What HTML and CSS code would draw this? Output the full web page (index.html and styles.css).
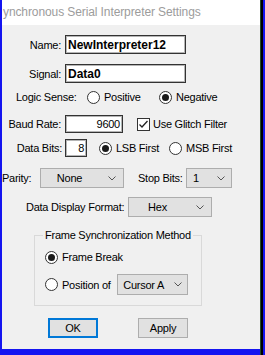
FILE: index.html
```html
<!DOCTYPE html>
<html lang="en">
<head>
    <meta charset="UTF-8">
    <title>Synchronous Serial Interpreter Settings</title>
    <link rel="stylesheet" href="styles.css">
</head>
<body>
    <div class="screen">
        <div class="window">
            <div class="titlebar">ynchronous Serial Interpreter Settings</div>

            <div class="content">
                <div class="row row-name">
                    <span class="label label-col">Name:</span>
                    <span class="textbox textbox-wide bold">NewInterpreter12</span>
                </div>

                <div class="row row-signal">
                    <span class="label label-col">Signal:</span>
                    <span class="textbox textbox-wide bold">Data0</span>
                </div>

                <!-- logic sense -->
                <div class="row row-logic">
                    <span class="label">Logic Sense:</span>
                    <span class="option option-positive">
                        <span class="radio"></span>
                        <span class="label">Positive</span>
                    </span>
                    <span class="option">
                        <span class="radio checked"></span>
                        <span class="label">Negative</span>
                    </span>
                </div>

                <div class="row row-baud">
                    <span class="label label-col">Baud Rate:</span>
                    <span class="textbox textbox-baud num">9600</span>
                    <span class="option option-glitch">
                        <span class="checkbox">
                            <svg width="11" height="11" viewBox="0 0 11 11"><polyline points="1.5,5.5 4,8 9.5,2" fill="none" stroke="#222" stroke-width="1.3"/></svg>
                        </span>
                        <span class="label">Use Glitch Filter</span>
                    </span>
                </div>

                <div class="row row-bits">
                    <span class="label label-col label-bits">Data Bits:</span>
                    <span class="textbox textbox-bits num">8</span>
                    <span class="option option-lsb">
                        <span class="radio checked"></span>
                        <span class="label">LSB First</span>
                    </span>
                    <span class="option">
                        <span class="radio"></span>
                        <span class="label">MSB First</span>
                    </span>
                </div>

                <div class="row row-parity">
                    <span class="label label-parity">Parity:</span>
                    <span class="combo combo-parity">
                        <span class="combo-text">None</span>
                        <svg class="chevron" width="8" height="5" viewBox="0 0 8 5"><polyline points="0.5,0.5 4,4 7.5,0.5" fill="none" stroke="#555" stroke-width="1"/></svg>
                    </span>
                    <span class="label label-stop">Stop Bits:</span>
                    <span class="combo combo-stop">
                        <span class="combo-text">1</span>
                        <svg class="chevron" width="8" height="5" viewBox="0 0 8 5"><polyline points="0.5,0.5 4,4 7.5,0.5" fill="none" stroke="#555" stroke-width="1"/></svg>
                    </span>
                </div>

                <div class="row row-format">
                    <span class="label">Data Display Format:</span>
                    <span class="combo combo-format">
                        <span class="combo-text">Hex</span>
                        <svg class="chevron" width="8" height="5" viewBox="0 0 8 5"><polyline points="0.5,0.5 4,4 7.5,0.5" fill="none" stroke="#555" stroke-width="1"/></svg>
                    </span>
                </div>

                <!-- frame sync group -->
                <fieldset class="group">
                    <legend class="group-title">Frame Synchronization Method</legend>
                    <div class="row row-break">
                        <span class="option">
                            <span class="radio checked"></span>
                            <span class="label">Frame Break</span>
                        </span>
                    </div>
                    <div class="row row-position">
                        <span class="option">
                            <span class="radio"></span>
                            <span class="label">Position of</span>
                        </span>
                        <span class="combo combo-cursor">
                            <span class="combo-text">Cursor A</span>
                            <svg class="chevron" width="8" height="5" viewBox="0 0 8 5"><polyline points="0.5,0.5 4,4 7.5,0.5" fill="none" stroke="#555" stroke-width="1"/></svg>
                        </span>
                    </div>
                </fieldset>

                <div class="buttons">
                    <button class="btn btn-default">OK</button>
                    <button class="btn">Apply</button>
                </div>
            </div>
        </div>
        <div class="edge"></div>
    </div>
</body>
</html>
```

FILE: styles.css
```css
body {
    margin: 0;
    padding: 0;
    width: 265px;
    height: 355px;
    overflow: hidden;
    background: #1414f0;
    font-family: 'Liberation Sans', Arial, sans-serif;
    font-size: 11px;
    letter-spacing: -0.25px;
    color: #000;
}

.screen {
    display: flex;
    height: 355px;
    padding-left: 2px;
    box-sizing: border-box;
}

.window {
    width: 258px;
    height: 349px;
    background: #f0f0f0;
    display: flex;
    flex-direction: column;
}

.edge {
    width: 2px;
    height: 355px;
    background: #000;
    border-left: 1px solid #1f4a2a;
}

.titlebar {
    height: 25px;
    line-height: 24px;
    background: #fff;
    color: #9c9c9c;
    font-size: 12px;
    letter-spacing: -0.1px;
    padding-left: 1px;
    white-space: nowrap;
    overflow: hidden;
}

.content {
    display: flex;
    flex-direction: column;
}

.row {
    display: flex;
    align-items: center;
}

.label {
    white-space: nowrap;
}

.label-col {
    width: 59px;
    text-align: right;
    margin-right: 4px;
}

.label-bits {
    width: 60px;
    margin-right: 3px;
}

/* text boxes */
.textbox {
    height: 19px;
    box-sizing: border-box;
    background: #fff;
    border: 1px solid #333;
    box-shadow: inset 0 0 0 1px #b5b5b5;
    display: flex;
    align-items: center;
    padding: 0 2px;
}

.textbox.bold {
    font-weight: bold;
    font-size: 12px;
    letter-spacing: 0;
}

.textbox.num {
    justify-content: flex-end;
    padding-right: 2px;
}

.textbox-wide {
    width: 121px;
}

.textbox-baud {
    width: 58px;
}

.textbox-bits {
    width: 22px;
}

.row-name {
    margin-top: 10px;
}

.row-signal {
    margin-top: 10px;
}

.row-logic {
    margin-top: 6px;
    height: 16px;
    padding-left: 14px;
}

.row-logic > .label {
    width: 71px;
}

.row-baud {
    margin-top: 10px;
    height: 18px;
}

.row-baud .textbox,
.row-bits .textbox {
    height: 18px;
}

.row-bits {
    margin-top: 6px;
    height: 18px;
}

/* radios and checkboxes */
.option {
    display: flex;
    align-items: center;
    gap: 4px;
}

.option-positive {
    width: 72px;
}

.option-glitch {
    margin-left: 14px;
    gap: 3px;
}

.option-lsb {
    margin-left: 12px;
    width: 70px;
}

.radio {
    width: 13px;
    height: 13px;
    box-sizing: border-box;
    border: 1px solid #333;
    border-radius: 50%;
    background: #fff;
    display: flex;
    align-items: center;
    justify-content: center;
}

.radio.checked::after {
    content: "";
    width: 7px;
    height: 7px;
    border-radius: 50%;
    background: #1a1a1a;
}

.checkbox {
    width: 13px;
    height: 13px;
    box-sizing: border-box;
    border: 1px solid #333;
    background: #fff;
    display: flex;
    align-items: center;
    justify-content: center;
}

/* combo boxes */
.combo {
    height: 20px;
    box-sizing: border-box;
    background: #e1e1e1;
    border: 1px solid #adadad;
    display: flex;
    align-items: center;
    padding-right: 4px;
}

.combo-text {
    flex: 1;
    text-align: center;
}

.chevron {
    flex: none;
}

.row-parity {
    margin-top: 11px;
    height: 20px;
}

.label-parity {
    width: 38px;
}

.combo-parity {
    width: 84px;
    padding-right: 7px;
}

.combo-parity .combo-text {
    padding-right: 10px;
}

.label-stop {
    margin-left: 14px;
    width: 48px;
}

.combo-stop {
    width: 46px;
    padding-right: 6px;
}

.combo-stop .combo-text {
    padding-right: 12px;
}

.row-format {
    margin-top: 9px;
    height: 20px;
    padding-left: 24px;
}

.row-format .label {
    width: 102px;
}

.combo-format {
    width: 84px;
    padding-right: 7px;
}

.combo-format .combo-text {
    padding-right: 10px;
}

/* group box */
.group {
    margin: 12px 0 0 32px;
    width: 168px;
    box-sizing: border-box;
    border: 1px solid #d9d9d9;
    padding: 0 0 10px 10px;
    min-width: 0;
}

.group-title {
    margin-left: -2px;
    padding: 0 2px;
}

.row-break {
    margin-top: 8px;
    height: 16px;
}

.row-position {
    margin-top: 9px;
    height: 21px;
}

.combo-cursor {
    margin-left: 6px;
    width: 71px;
    height: 21px;
    padding-right: 5px;
}

.combo-cursor .combo-text {
    padding-right: 4px;
}

/* buttons */
.buttons {
    display: flex;
    margin-top: 12px;
    padding-left: 46px;
    gap: 40px;
}

.btn {
    width: 50px;
    height: 20px;
    padding: 0;
    margin: 0;
    background: #e1e1e1;
    border: 1px solid #adadad;
    font-family: 'Liberation Sans', Arial, sans-serif;
    font-size: 11px;
    letter-spacing: -0.25px;
    color: #000;
}

.btn-default {
    border: 2px solid #0078d7;
}
```
